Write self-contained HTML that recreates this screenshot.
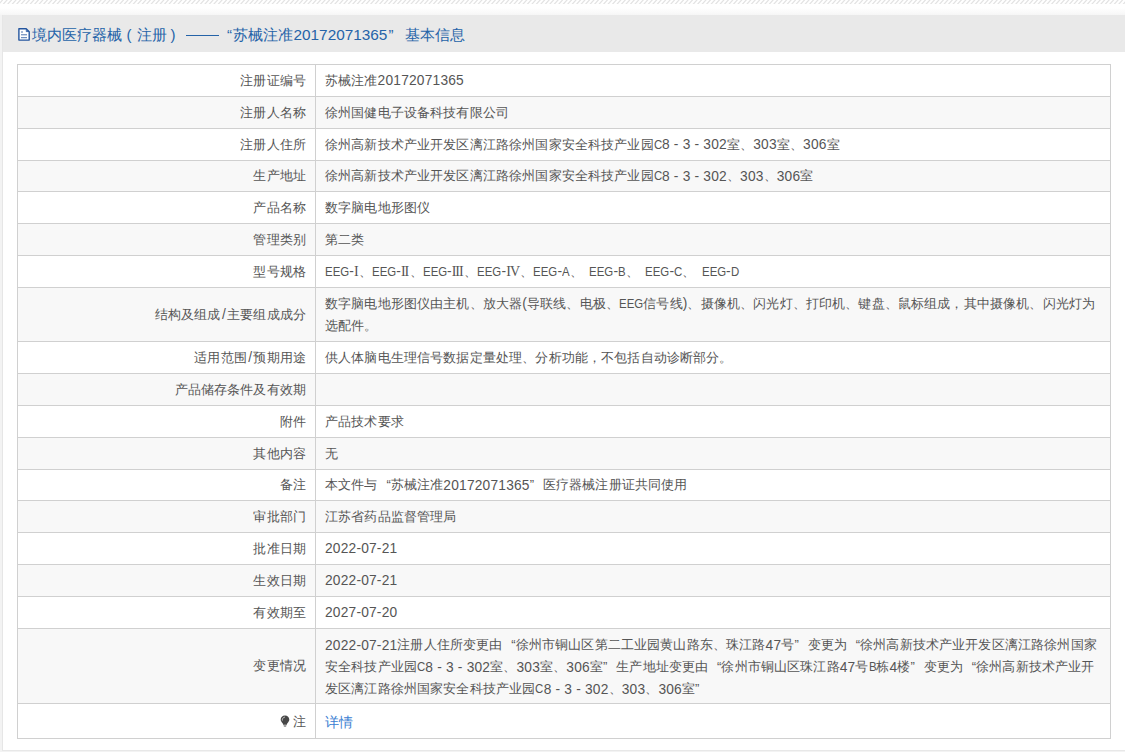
<!DOCTYPE html>
<html><head><meta charset="utf-8">
<style>
html,body{margin:0;padding:0;width:1125px;height:752px;overflow:hidden;background:#fff;}
body{position:relative;font-family:"Liberation Sans",sans-serif;}
.hatch{position:absolute;left:0;top:0;width:1125px;height:4px;
}
.band{position:absolute;left:0;top:8px;width:1125px;height:7px;background:linear-gradient(#fff,#f6f6f6);}
.lstrip{position:absolute;left:0;top:15px;width:2px;height:737px;background:#f3f3f3;}
.panel{position:absolute;left:2px;top:15px;width:1130px;height:735px;border-left:1px solid #e6e6e6;border-bottom:1px solid #e8e8e8;background:#fff;}
.bstrip{position:absolute;left:0;top:751px;width:1125px;height:1px;background:#f3f3f3;}
.head{position:absolute;left:3px;top:15px;width:1125px;height:37px;background:#e9e9e9;}
.title{position:absolute;top:17px;height:36px;line-height:36px;font-size:15px;color:#2563a8;white-space:nowrap;}
.tl{font-size:15.35px;letter-spacing:0;}
.dash{position:absolute;left:186px;top:35px;width:33px;height:1.2px;background:#2563a8;}
.doc{position:absolute;left:14px;top:24px;width:24px;height:24px;}
.row{position:absolute;left:17px;width:1092px;border:1px solid #d0d0d0;box-sizing:border-box;width:1094px;}
.colline{position:absolute;left:315px;top:64px;width:1px;height:674px;background:#d0d0d0;}
.lab,.val{position:absolute;display:flex;align-items:center;font-size:13px;letter-spacing:0.15px;line-height:22px;color:#555;white-space:nowrap;}
.lab{left:18px;width:288px;justify-content:flex-end;}
.val{left:325px;width:775px;}
.link{color:#3b80d2;font-size:14px;letter-spacing:-0.3px;}
.last{padding-top:2px;box-sizing:border-box;}
.last1{padding-top:2px;box-sizing:border-box;}
.d{font-size:13.75px;letter-spacing:0.2px;position:relative;top:0.6px;}
.sl{padding:0 1.2px 0 1.3px;}
.u{display:inline-block;letter-spacing:0;white-space:nowrap;}
.ui{display:inline-block;transform:scaleX(0.88);transform-origin:0 50%;}
.rn{display:inline-block;font-family:'Liberation Serif',serif;font-size:14px;letter-spacing:-1px;}
.q{display:inline-block;width:13.15px;letter-spacing:0;}
.ql{text-align:right;}
.qr{text-align:left;}
.bulb{display:inline-block;width:10px;height:12px;margin-right:2.5px;vertical-align:-1px;}
</style></head><body>
<svg class="hatch" width="1125" height="4" viewBox="0 0 1125 4"><path d="M-6.00 4.5L-1.50 -0.5M-1.52 4.5L2.98 -0.5M2.96 4.5L7.46 -0.5M7.44 4.5L11.94 -0.5M11.92 4.5L16.42 -0.5M16.40 4.5L20.90 -0.5M20.88 4.5L25.38 -0.5M25.36 4.5L29.86 -0.5M29.84 4.5L34.34 -0.5M34.32 4.5L38.82 -0.5M38.80 4.5L43.30 -0.5M43.28 4.5L47.78 -0.5M47.76 4.5L52.26 -0.5M52.24 4.5L56.74 -0.5M56.72 4.5L61.22 -0.5M61.20 4.5L65.70 -0.5M65.68 4.5L70.18 -0.5M70.16 4.5L74.66 -0.5M74.64 4.5L79.14 -0.5M79.12 4.5L83.62 -0.5M83.60 4.5L88.10 -0.5M88.08 4.5L92.58 -0.5M92.56 4.5L97.06 -0.5M97.04 4.5L101.54 -0.5M101.52 4.5L106.02 -0.5M106.00 4.5L110.50 -0.5M110.48 4.5L114.98 -0.5M114.96 4.5L119.46 -0.5M119.44 4.5L123.94 -0.5M123.92 4.5L128.42 -0.5M128.40 4.5L132.90 -0.5M132.88 4.5L137.38 -0.5M137.36 4.5L141.86 -0.5M141.84 4.5L146.34 -0.5M146.32 4.5L150.82 -0.5M150.80 4.5L155.30 -0.5M155.28 4.5L159.78 -0.5M159.76 4.5L164.26 -0.5M164.24 4.5L168.74 -0.5M168.72 4.5L173.22 -0.5M173.20 4.5L177.70 -0.5M177.68 4.5L182.18 -0.5M182.16 4.5L186.66 -0.5M186.64 4.5L191.14 -0.5M191.12 4.5L195.62 -0.5M195.60 4.5L200.10 -0.5M200.08 4.5L204.58 -0.5M204.56 4.5L209.06 -0.5M209.04 4.5L213.54 -0.5M213.52 4.5L218.02 -0.5M218.00 4.5L222.50 -0.5M222.48 4.5L226.98 -0.5M226.96 4.5L231.46 -0.5M231.44 4.5L235.94 -0.5M235.92 4.5L240.42 -0.5M240.40 4.5L244.90 -0.5M244.88 4.5L249.38 -0.5M249.36 4.5L253.86 -0.5M253.84 4.5L258.34 -0.5M258.32 4.5L262.82 -0.5M262.80 4.5L267.30 -0.5M267.28 4.5L271.78 -0.5M271.76 4.5L276.26 -0.5M276.24 4.5L280.74 -0.5M280.72 4.5L285.22 -0.5M285.20 4.5L289.70 -0.5M289.68 4.5L294.18 -0.5M294.16 4.5L298.66 -0.5M298.64 4.5L303.14 -0.5M303.12 4.5L307.62 -0.5M307.60 4.5L312.10 -0.5M312.08 4.5L316.58 -0.5M316.56 4.5L321.06 -0.5M321.04 4.5L325.54 -0.5M325.52 4.5L330.02 -0.5M330.00 4.5L334.50 -0.5M334.48 4.5L338.98 -0.5M338.96 4.5L343.46 -0.5M343.44 4.5L347.94 -0.5M347.92 4.5L352.42 -0.5M352.40 4.5L356.90 -0.5M356.88 4.5L361.38 -0.5M361.36 4.5L365.86 -0.5M365.84 4.5L370.34 -0.5M370.32 4.5L374.82 -0.5M374.80 4.5L379.30 -0.5M379.28 4.5L383.78 -0.5M383.76 4.5L388.26 -0.5M388.24 4.5L392.74 -0.5M392.72 4.5L397.22 -0.5M397.20 4.5L401.70 -0.5M401.68 4.5L406.18 -0.5M406.16 4.5L410.66 -0.5M410.64 4.5L415.14 -0.5M415.12 4.5L419.62 -0.5M419.60 4.5L424.10 -0.5M424.08 4.5L428.58 -0.5M428.56 4.5L433.06 -0.5M433.04 4.5L437.54 -0.5M437.52 4.5L442.02 -0.5M442.00 4.5L446.50 -0.5M446.48 4.5L450.98 -0.5M450.96 4.5L455.46 -0.5M455.44 4.5L459.94 -0.5M459.92 4.5L464.42 -0.5M464.40 4.5L468.90 -0.5M468.88 4.5L473.38 -0.5M473.36 4.5L477.86 -0.5M477.84 4.5L482.34 -0.5M482.32 4.5L486.82 -0.5M486.80 4.5L491.30 -0.5M491.28 4.5L495.78 -0.5M495.76 4.5L500.26 -0.5M500.24 4.5L504.74 -0.5M504.72 4.5L509.22 -0.5M509.20 4.5L513.70 -0.5M513.68 4.5L518.18 -0.5M518.16 4.5L522.66 -0.5M522.64 4.5L527.14 -0.5M527.12 4.5L531.62 -0.5M531.60 4.5L536.10 -0.5M536.08 4.5L540.58 -0.5M540.56 4.5L545.06 -0.5M545.04 4.5L549.54 -0.5M549.52 4.5L554.02 -0.5M554.00 4.5L558.50 -0.5M558.48 4.5L562.98 -0.5M562.96 4.5L567.46 -0.5M567.44 4.5L571.94 -0.5M571.92 4.5L576.42 -0.5M576.40 4.5L580.90 -0.5M580.88 4.5L585.38 -0.5M585.36 4.5L589.86 -0.5M589.84 4.5L594.34 -0.5M594.32 4.5L598.82 -0.5M598.80 4.5L603.30 -0.5M603.28 4.5L607.78 -0.5M607.76 4.5L612.26 -0.5M612.24 4.5L616.74 -0.5M616.72 4.5L621.22 -0.5M621.20 4.5L625.70 -0.5M625.68 4.5L630.18 -0.5M630.16 4.5L634.66 -0.5M634.64 4.5L639.14 -0.5M639.12 4.5L643.62 -0.5M643.60 4.5L648.10 -0.5M648.08 4.5L652.58 -0.5M652.56 4.5L657.06 -0.5M657.04 4.5L661.54 -0.5M661.52 4.5L666.02 -0.5M666.00 4.5L670.50 -0.5M670.48 4.5L674.98 -0.5M674.96 4.5L679.46 -0.5M679.44 4.5L683.94 -0.5M683.92 4.5L688.42 -0.5M688.40 4.5L692.90 -0.5M692.88 4.5L697.38 -0.5M697.36 4.5L701.86 -0.5M701.84 4.5L706.34 -0.5M706.32 4.5L710.82 -0.5M710.80 4.5L715.30 -0.5M715.28 4.5L719.78 -0.5M719.76 4.5L724.26 -0.5M724.24 4.5L728.74 -0.5M728.72 4.5L733.22 -0.5M733.20 4.5L737.70 -0.5M737.68 4.5L742.18 -0.5M742.16 4.5L746.66 -0.5M746.64 4.5L751.14 -0.5M751.12 4.5L755.62 -0.5M755.60 4.5L760.10 -0.5M760.08 4.5L764.58 -0.5M764.56 4.5L769.06 -0.5M769.04 4.5L773.54 -0.5M773.52 4.5L778.02 -0.5M778.00 4.5L782.50 -0.5M782.48 4.5L786.98 -0.5M786.96 4.5L791.46 -0.5M791.44 4.5L795.94 -0.5M795.92 4.5L800.42 -0.5M800.40 4.5L804.90 -0.5M804.88 4.5L809.38 -0.5M809.36 4.5L813.86 -0.5M813.84 4.5L818.34 -0.5M818.32 4.5L822.82 -0.5M822.80 4.5L827.30 -0.5M827.28 4.5L831.78 -0.5M831.76 4.5L836.26 -0.5M836.24 4.5L840.74 -0.5M840.72 4.5L845.22 -0.5M845.20 4.5L849.70 -0.5M849.68 4.5L854.18 -0.5M854.16 4.5L858.66 -0.5M858.64 4.5L863.14 -0.5M863.12 4.5L867.62 -0.5M867.60 4.5L872.10 -0.5M872.08 4.5L876.58 -0.5M876.56 4.5L881.06 -0.5M881.04 4.5L885.54 -0.5M885.52 4.5L890.02 -0.5M890.00 4.5L894.50 -0.5M894.48 4.5L898.98 -0.5M898.96 4.5L903.46 -0.5M903.44 4.5L907.94 -0.5M907.92 4.5L912.42 -0.5M912.40 4.5L916.90 -0.5M916.88 4.5L921.38 -0.5M921.36 4.5L925.86 -0.5M925.84 4.5L930.34 -0.5M930.32 4.5L934.82 -0.5M934.80 4.5L939.30 -0.5M939.28 4.5L943.78 -0.5M943.76 4.5L948.26 -0.5M948.24 4.5L952.74 -0.5M952.72 4.5L957.22 -0.5M957.20 4.5L961.70 -0.5M961.68 4.5L966.18 -0.5M966.16 4.5L970.66 -0.5M970.64 4.5L975.14 -0.5M975.12 4.5L979.62 -0.5M979.60 4.5L984.10 -0.5M984.08 4.5L988.58 -0.5M988.56 4.5L993.06 -0.5M993.04 4.5L997.54 -0.5M997.52 4.5L1002.02 -0.5M1002.00 4.5L1006.50 -0.5M1006.48 4.5L1010.98 -0.5M1010.96 4.5L1015.46 -0.5M1015.44 4.5L1019.94 -0.5M1019.92 4.5L1024.42 -0.5M1024.40 4.5L1028.90 -0.5M1028.88 4.5L1033.38 -0.5M1033.36 4.5L1037.86 -0.5M1037.84 4.5L1042.34 -0.5M1042.32 4.5L1046.82 -0.5M1046.80 4.5L1051.30 -0.5M1051.28 4.5L1055.78 -0.5M1055.76 4.5L1060.26 -0.5M1060.24 4.5L1064.74 -0.5M1064.72 4.5L1069.22 -0.5M1069.20 4.5L1073.70 -0.5M1073.68 4.5L1078.18 -0.5M1078.16 4.5L1082.66 -0.5M1082.64 4.5L1087.14 -0.5M1087.12 4.5L1091.62 -0.5M1091.60 4.5L1096.10 -0.5M1096.08 4.5L1100.58 -0.5M1100.56 4.5L1105.06 -0.5M1105.04 4.5L1109.54 -0.5M1109.52 4.5L1114.02 -0.5M1114.00 4.5L1118.50 -0.5M1118.48 4.5L1122.98 -0.5M1122.96 4.5L1127.46 -0.5M1127.44 4.5L1131.94 -0.5" stroke="#e3e3e3" stroke-width="1.25"/></svg>
<div class="band"></div>
<div class="lstrip"></div><div class="panel"></div><div class="bstrip"></div>
<div class="head"></div>
<svg class="doc" viewBox="14 24 24 24"><path d="M18.9 28.7H26.2L29.2 31.7V40.1H18.9Z" fill="#fff" stroke="#24559e" stroke-width="1.4" stroke-linejoin="round"/><path d="M26.3 29.2V31.6H28.7" fill="none" stroke="#24559e" stroke-width="0.9"/><path d="M21 32H23M21 34.8H27M21 37.7H27" stroke="#3a64a5" stroke-width="0.9"/></svg>
<div class="title" style="left:31.5px">境内医疗器械</div>
<div class="title" style="left:126.5px">(</div>
<div class="title" style="left:137px">注册</div>
<div class="title" style="left:170.5px">)</div>
<div class="dash"></div>
<div class="title" style="left:227px">“</div>
<div class="title" style="left:233px">苏械注准</div>
<div class="title tl" style="left:293.5px">20172071365</div>
<div class="title" style="left:388.5px">”</div>
<div class="title" style="left:405px">基本信息</div>
<div class="row" style="top:64px;height:33px;background:#fff"></div><div class="lab" style="top:65px;height:31px"><span>注册证编号</span></div><div class="val" style="top:65px;height:31px"><span>苏械注准<span class="d">20172071365</span></span></div><div class="row" style="top:96px;height:33px;background:#f8f8f8"></div><div class="lab" style="top:97px;height:31px"><span>注册人名称</span></div><div class="val" style="top:97px;height:31px"><span>徐州国健电子设备科技有限公司</span></div><div class="row" style="top:128px;height:33px;background:#fff"></div><div class="lab" style="top:129px;height:31px"><span>注册人住所</span></div><div class="val" style="top:129px;height:31px"><span>徐州高新技术产业开发区漓江路徐州国家安全科技产业园<span class="u" style="width:8.26px"><span class="ui">C</span></span><span class="d">8&nbsp;-&nbsp;3&nbsp;-&nbsp;302</span>室、<span class="d">303</span>室、<span class="d">306</span>室</span></div><div class="row" style="top:160px;height:32px;background:#f8f8f8"></div><div class="lab" style="top:161px;height:30px"><span>生产地址</span></div><div class="val" style="top:161px;height:30px"><span>徐州高新技术产业开发区漓江路徐州国家安全科技产业园<span class="u" style="width:8.26px"><span class="ui">C</span></span><span class="d">8&nbsp;-&nbsp;3&nbsp;-&nbsp;302</span>、<span class="d">303</span>、<span class="d">306</span>室</span></div><div class="row" style="top:191px;height:33px;background:#fff"></div><div class="lab" style="top:192px;height:31px"><span>产品名称</span></div><div class="val" style="top:192px;height:31px"><span>数字脑电地形图仪</span></div><div class="row" style="top:223px;height:33px;background:#f8f8f8"></div><div class="lab" style="top:224px;height:31px"><span>管理类别</span></div><div class="val" style="top:224px;height:31px"><span>第二类</span></div><div class="row" style="top:255px;height:33px;background:#fff"></div><div class="lab" style="top:256px;height:31px"><span>型号规格</span></div><div class="val" style="top:256px;height:31px"><span><span class="u" style="width:24.16px"><span class="ui">EEG</span></span><span class="d">-</span><span class="rn" style="width:4.9px">I</span>、<span class="u" style="width:24.16px"><span class="ui">EEG</span></span><span class="d">-</span><span class="rn" style="width:8.7px">II</span>、<span class="u" style="width:24.16px"><span class="ui">EEG</span></span><span class="d">-</span><span class="rn" style="width:12.5px">III</span>、<span class="u" style="width:24.16px"><span class="ui">EEG</span></span><span class="d">-</span><span class="rn" style="width:14px">IV</span>、<span class="u" style="width:24.16px"><span class="ui">EEG</span></span><span class="d">-</span><span class="u" style="width:7.63px"><span class="ui">A</span></span>、<span style="display:inline-block;width:6.2px"></span><span class="u" style="width:24.16px"><span class="ui">EEG</span></span><span class="d">-</span><span class="u" style="width:7.63px"><span class="ui">B</span></span>、<span style="display:inline-block;width:6.2px"></span><span class="u" style="width:24.16px"><span class="ui">EEG</span></span><span class="d">-</span><span class="u" style="width:8.26px"><span class="ui">C</span></span>、<span style="display:inline-block;width:6.2px"></span><span class="u" style="width:24.16px"><span class="ui">EEG</span></span><span class="d">-</span><span class="u" style="width:8.26px"><span class="ui">D</span></span></span></div><div class="row" style="top:287px;height:55px;background:#f8f8f8"></div><div class="lab" style="top:288px;height:53px"><span>结构及组成<span class="d"><span class="sl">/</span></span>主要组成成分</span></div><div class="val" style="top:288px;height:53px"><span>数字脑电地形图仪由主机、放大器<span class="d">(</span>导联线、电极、<span class="u" style="width:24.16px"><span class="ui">EEG</span></span>信号线<span class="d">)</span>、摄像机、闪光灯、打印机、键盘、鼠标组成，其中摄像机、闪光灯为<br>选配件。</span></div><div class="row" style="top:341px;height:33px;background:#fff"></div><div class="lab" style="top:342px;height:31px"><span>适用范围<span class="d"><span class="sl">/</span></span>预期用途</span></div><div class="val" style="top:342px;height:31px"><span>供人体脑电生理信号数据定量处理、分析功能，不包括自动诊断部分。</span></div><div class="row" style="top:373px;height:33px;background:#f8f8f8"></div><div class="lab" style="top:374px;height:31px"><span>产品储存条件及有效期</span></div><div class="val" style="top:374px;height:31px"><span></span></div><div class="row" style="top:405px;height:33px;background:#fff"></div><div class="lab" style="top:406px;height:31px"><span>附件</span></div><div class="val" style="top:406px;height:31px"><span>产品技术要求</span></div><div class="row" style="top:437px;height:33px;background:#f8f8f8"></div><div class="lab" style="top:438px;height:31px"><span>其他内容</span></div><div class="val" style="top:438px;height:31px"><span>无</span></div><div class="row" style="top:469px;height:32px;background:#fff"></div><div class="lab" style="top:470px;height:30px"><span>备注</span></div><div class="val" style="top:470px;height:30px"><span>本文件与<span class="q ql">“</span>苏械注准<span class="d">20172071365</span><span class="q qr">”</span>医疗器械注册证共同使用</span></div><div class="row" style="top:500px;height:33px;background:#f8f8f8"></div><div class="lab" style="top:501px;height:31px"><span>审批部门</span></div><div class="val" style="top:501px;height:31px"><span>江苏省药品监督管理局</span></div><div class="row" style="top:532px;height:33px;background:#fff"></div><div class="lab" style="top:533px;height:31px"><span>批准日期</span></div><div class="val" style="top:533px;height:31px"><span><span class="d">2022-07-21</span></span></div><div class="row" style="top:564px;height:33px;background:#f8f8f8"></div><div class="lab" style="top:565px;height:31px"><span>生效日期</span></div><div class="val" style="top:565px;height:31px"><span><span class="d">2022-07-21</span></span></div><div class="row" style="top:596px;height:33px;background:#fff"></div><div class="lab" style="top:597px;height:31px"><span>有效期至</span></div><div class="val" style="top:597px;height:31px"><span><span class="d">2027-07-20</span></span></div><div class="row" style="top:628px;height:76px;background:#f8f8f8"></div><div class="lab" style="top:629px;height:74px"><span>变更情况</span></div><div class="val last1" style="top:629px;height:74px"><span><span class="d">2022-07-21</span>注册人住所变更由<span class="q ql">“</span>徐州市铜山区第二工业园黄山路东、珠江路<span class="d">47</span>号<span class="q qr">”</span>变更为<span class="q ql">“</span>徐州高新技术产业开发区漓江路徐州国家<br>安全科技产业园<span class="u" style="width:8.26px"><span class="ui">C</span></span><span class="d">8&nbsp;-&nbsp;3&nbsp;-&nbsp;302</span>室、<span class="d">303</span>室、<span class="d">306</span>室<span class="q qr">”</span>生产地址变更由<span class="q ql">“</span>徐州市铜山区珠江路<span class="d">47</span>号<span class="u" style="width:7.63px"><span class="ui">B</span></span>栋<span class="d">4</span>楼<span class="q qr">”</span>变更为<span class="q ql">“</span>徐州高新技术产业开<br>发区漓江路徐州国家安全科技产业园<span class="u" style="width:8.26px"><span class="ui">C</span></span><span class="d">8&nbsp;-&nbsp;3&nbsp;-&nbsp;302</span>、<span class="d">303</span>、<span class="d">306</span>室<span class="q qr">”</span></span></div><div class="row" style="top:703px;height:36px;background:#fff"></div><div class="lab last" style="top:704px;height:34px"><span><svg class="bulb" viewBox="0 0 10 12"><path d="M5 0.6C2.5 0.6 0.7 2.4 0.7 4.6C0.7 6.3 1.8 7.3 2.6 8.3C3 8.8 3.1 9.3 3.1 9.8H6.9C6.9 9.3 7 8.8 7.4 8.3C8.2 7.3 9.3 6.3 9.3 4.6C9.3 2.4 7.5 0.6 5 0.6Z" fill="#474747"/><path d="M3.6 10.6H6.4V11.1C6.4 11.4 6.1 11.6 5.8 11.6H4.2C3.9 11.6 3.6 11.4 3.6 11.1Z" fill="#474747"/><path d="M2.3 5.2C2.1 3.6 3.2 2.3 4.6 2.1" fill="none" stroke="#cfcfcf" stroke-width="0.9" stroke-linecap="round"/></svg>注</span></div><div class="val link last" style="top:704px;height:34px"><span>详情</span></div>
<div class="colline"></div>
</body></html>
